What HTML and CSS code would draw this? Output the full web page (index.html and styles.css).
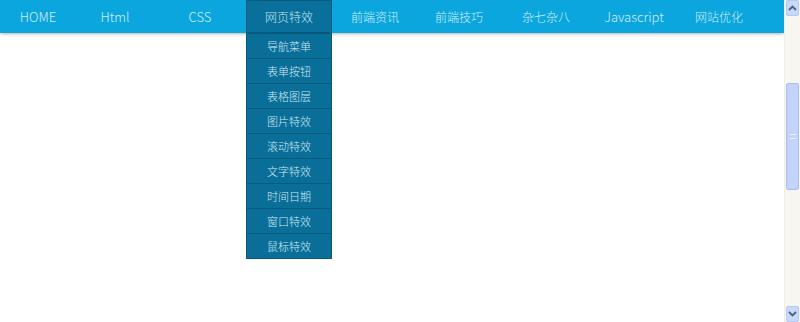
FILE: index.html
```html
<!DOCTYPE html>
<html lang="zh-CN">
<head>
  <meta charset="UTF-8" />
  <title>导航菜单</title>
  <link rel="stylesheet" href="styles.css">
</head>
<body>
  <div class="page">
    <div class="main">
      <ul class="nav">
        <li class="en"><a href="#">HOME</a></li>
        <li class="en"><a href="#">Html</a></li>
        <li class="en"><a href="#">CSS</a></li>
        <li class="active">
          <a href="#">网页特效</a>
          <ul class="sub">
            <li><a href="#">导航菜单</a></li>
            <li><a href="#">表单按钮</a></li>
            <li><a href="#">表格图层</a></li>
            <li><a href="#">图片特效</a></li>
            <li><a href="#">滚动特效</a></li>
            <li><a href="#">文字特效</a></li>
            <li><a href="#">时间日期</a></li>
            <li><a href="#">窗口特效</a></li>
            <li><a href="#">鼠标特效</a></li>
          </ul>
        </li>
        <li><a href="#">前端资讯</a></li>
        <li><a href="#">前端技巧</a></li>
        <li><a href="#">杂七杂八</a></li>
        <li class="en"><a href="#">Javascript</a></li>
        <li><a href="#">网站优化</a></li>
      </ul>
    </div>
    <div class="scrollbar">
      <div class="sb-btn">
        <svg width="9" height="6" viewBox="0 0 9 6"><path d="M1 5 L4.5 1.5 L8 5" fill="none" stroke="#4d6185" stroke-width="1.8"/></svg>
      </div>
      <div class="sb-track">
        <div class="sb-thumb"><span class="grip"></span></div>
      </div>
      <div class="sb-btn">
        <svg width="9" height="6" viewBox="0 0 9 6"><path d="M1 1 L4.5 4.5 L8 1" fill="none" stroke="#4d6185" stroke-width="1.8"/></svg>
      </div>
    </div>
  </div>
</body>
</html>
```

FILE: styles.css
```css
html, body {
  margin: 0;
  padding: 0;
  height: 100%;
}

body {
  font-family: "Noto Sans CJK SC", "Liberation Sans", sans-serif;
  background: #fff;
  overflow: hidden;
}

.page {
  display: flex;
  height: 322px;
}

.main {
  flex: 1;
}

ul {
  list-style: none;
  margin: 0;
  padding: 0;
}

a {
  text-decoration: none;
  color: inherit;
}

.nav {
  display: flex;
  height: 33px;
  background: #0ba6dd;
  box-shadow: 0 1px 3px rgba(0, 0, 0, 0.3);
  color: #d3eef9;
  font-size: 12px;
  font-weight: 300;
}

.nav > li {
  position: relative;
  width: 86px;
  text-align: center;
  line-height: 33px;
}

.nav > li.en {
  font-size: 13px;
}

.nav > li:nth-child(1) { width: 76px; }
.nav > li:nth-child(2) { width: 78px; }
.nav > li:nth-child(3) { width: 92px; }
.nav > li:nth-child(6) { width: 82px; }
.nav > li:nth-child(7) { width: 92px; }
.nav > li:nth-child(8) { width: 84px; }

.nav > li.active {
  background: #08709b;
  box-shadow: inset 0 0 0 1px #065a7c;
  color: #c4e3f0;
}

.sub {
  position: absolute;
  top: 33px;
  left: 0;
  width: 86px;
  background: #0a6f98;
  border: 1px solid #065a7c;
  border-top: none;
  box-sizing: border-box;
  z-index: 2;
}

.sub li {
  height: 24px;
  line-height: 24px;
  border-top: 1px solid #065a7c;
  font-size: 11px;
  color: #cfe8f3;
}

.scrollbar {
  width: 16px;
  display: flex;
  flex-direction: column;
  background: #f7f6f1;
  border-left: 1px solid #eeede5;
  box-sizing: border-box;
}

.sb-btn {
  height: 16px;
  margin: 0 1px;
  background: #c9d8fb;
  border: 1px solid #b5c8f0;
  border-radius: 2px;
  box-sizing: border-box;
  display: flex;
  align-items: center;
  justify-content: center;
}

.sb-track {
  flex: 1;
  padding-top: 67px;
}

.sb-thumb {
  height: 107px;
  margin: 0 1px;
  background: #c3d3fc;
  border: 1px solid #a9bff0;
  border-radius: 2px;
  box-sizing: border-box;
  display: flex;
  align-items: center;
  justify-content: center;
}

.grip {
  width: 6px;
  height: 5px;
  border-top: 1px solid #eef3ff;
  border-bottom: 1px solid #eef3ff;
  box-sizing: border-box;
}
```
